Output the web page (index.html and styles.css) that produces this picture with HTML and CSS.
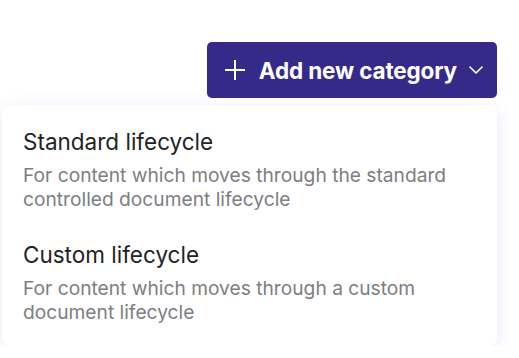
FILE: index.html
```html
<!DOCTYPE html>
<html lang="en">
<head>
  <meta charset="UTF-8">
  <meta name="viewport" content="width=device-width, initial-scale=1.0">
  <title>Add new category</title>
  <link rel="stylesheet" href="styles.css">
</head>
<body>
  <div class="toolbar">
    <button class="add-button" type="button">
      <svg class="plus" width="22" height="22" viewBox="0 0 22 22" aria-hidden="true">
        <path d="M11 1v20M1 11h20" stroke="#fff" stroke-width="2" fill="none"/>
      </svg>
      <span class="add-label">Add new category</span>
      <svg class="chevron" width="14" height="8" viewBox="0 0 14 8" aria-hidden="true">
        <path d="M1 1l6 6 6-6" stroke="#fff" stroke-width="1.6" fill="none" stroke-linecap="round" stroke-linejoin="round"/>
      </svg>
    </button>

    <div class="menu">
      <div class="menu-item">
        <div class="item-title">Standard lifecycle</div>
        <div class="item-desc">For content which moves through the standard controlled document lifecycle</div>
      </div>
      <div class="menu-item">
        <div class="item-title">Custom lifecycle</div>
        <div class="item-desc">For content which moves through a custom document lifecycle</div>
      </div>
    </div>
  </div>
</body>
</html>
```

FILE: styles.css
```css
body {
  font-family: Inter, "Noto Sans", sans-serif;
  margin: 0;
  background-color: #fff;
}

.toolbar {
  display: flex;
  flex-direction: column;
  align-items: flex-end;
  padding: 42px 22px 0 0;
}

.add-button {
  display: flex;
  align-items: center;
  height: 56px;
  padding: 0 14px 0 17px;
  border: none;
  border-radius: 5px;
  background-color: #362a89;
  color: #fff;
  font-family: inherit;
  cursor: pointer;
}

.plus {
  margin-right: 13px;
}

.add-label {
  font-size: 22.5px;
  font-weight: 700;
  letter-spacing: -0.15px;
}

.chevron {
  margin-left: 12px;
}

.menu {
  width: 495px;
  margin-top: 7px;
  padding: 8px 0 7px;
  box-sizing: border-box;
  background-color: #fff;
  border-radius: 8px;
  box-shadow: 0 4px 18px rgba(90, 70, 200, 0.13);
}

.menu-item {
  padding: 15px 21px;
}

.item-title {
  font-size: 22.5px;
  line-height: 28px;
  color: #222226;
}

.item-desc {
  margin-top: 7px;
  font-size: 19.2px;
  line-height: 24px;
  color: #7d7d84;
}
```
